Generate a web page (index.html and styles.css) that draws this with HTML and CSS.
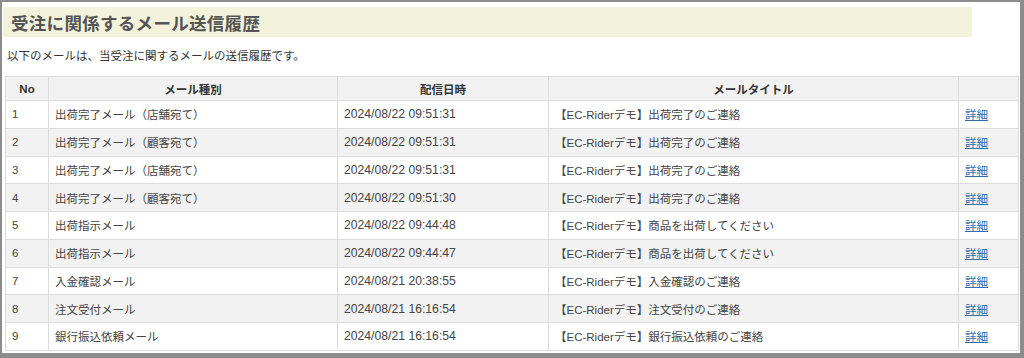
FILE: index.html
```html
<!DOCTYPE html>
<html lang="ja">
<head>
<meta charset="utf-8">
<link rel="stylesheet" href="styles.css">
</head>
<body>
<div class="frame">
  <div class="heading"><h1>受注に関係するメール送信履歴</h1></div>
  <p class="desc">以下のメールは、当受注に関するメールの送信履歴です。</p>
  <table class="hist">
    <colgroup>
      <col class="c-no"><col class="c-kind"><col class="c-date"><col class="c-title"><col class="c-link">
    </colgroup>
    <thead>
      <tr><th>No</th><th>メール種別</th><th>配信日時</th><th>メールタイトル</th><th></th></tr>
    </thead>
    <tbody>
      <tr><td>1</td><td>出荷完了メール（店舗宛て）</td><td class="date">2024/08/22 09:51:31</td><td>【EC-Riderデモ】出荷完了のご連絡</td><td><a href="#">詳細</a></td></tr>
      <tr><td>2</td><td>出荷完了メール（顧客宛て）</td><td class="date">2024/08/22 09:51:31</td><td>【EC-Riderデモ】出荷完了のご連絡</td><td><a href="#">詳細</a></td></tr>
      <tr><td>3</td><td>出荷完了メール（店舗宛て）</td><td class="date">2024/08/22 09:51:31</td><td>【EC-Riderデモ】出荷完了のご連絡</td><td><a href="#">詳細</a></td></tr>
      <tr><td>4</td><td>出荷完了メール（顧客宛て）</td><td class="date">2024/08/22 09:51:30</td><td>【EC-Riderデモ】出荷完了のご連絡</td><td><a href="#">詳細</a></td></tr>
      <tr><td>5</td><td>出荷指示メール</td><td class="date">2024/08/22 09:44:48</td><td>【EC-Riderデモ】商品を出荷してください</td><td><a href="#">詳細</a></td></tr>
      <tr><td>6</td><td>出荷指示メール</td><td class="date">2024/08/22 09:44:47</td><td>【EC-Riderデモ】商品を出荷してください</td><td><a href="#">詳細</a></td></tr>
      <tr><td>7</td><td>入金確認メール</td><td class="date">2024/08/21 20:38:55</td><td>【EC-Riderデモ】入金確認のご連絡</td><td><a href="#">詳細</a></td></tr>
      <tr><td>8</td><td>注文受付メール</td><td class="date">2024/08/21 16:16:54</td><td>【EC-Riderデモ】注文受付のご連絡</td><td><a href="#">詳細</a></td></tr>
      <tr><td>9</td><td>銀行振込依頼メール</td><td class="date">2024/08/21 16:16:54</td><td>【EC-Riderデモ】銀行振込依頼のご連絡</td><td><a href="#">詳細</a></td></tr>
    </tbody>
  </table>
</div>
</body>
</html>
```
FILE: styles.css
```css
html, body {
  margin: 0;
  padding: 0;
  background: #fff;
}
body {
  font-family: "Liberation Sans", Arial, "Noto Sans CJK JP", sans-serif;
  color: #333;
}
.frame {
  box-sizing: border-box;
  width: 1024px;
  height: 358px;
  border-style: solid;
  border-color: #8c8c8c;
  border-width: 2px 4px 5px 2px;
  overflow: hidden;
}
.heading {
  margin: 5px 0 0 1px;
  width: 969px;
  height: 30px;
  background: #f3f3dc;
  display: flex;
  align-items: center;
}
.heading h1 {
  margin: 0 0 0 8px;
  font-size: 17.5px;
  font-weight: bold;
  color: #555;
  letter-spacing: 0.3px;
}
.desc {
  margin: 9px 0 0 5px;
  height: 20px;
  line-height: 20px;
  font-size: 11.5px;
  color: #333;
}
.hist {
  margin: 10px 0 0 3px;
  width: 1013px;
  border-collapse: collapse;
  table-layout: fixed;
  font-size: 11.5px;
}
.c-no { width: 43px; }
.c-kind { width: 289px; }
.c-date { width: 211px; }
.c-title { width: 410px; }
.c-link { width: 60px; }
.hist th, .hist td {
  border: 1px solid #dcdcdc;
  padding: 0 6px;
  white-space: nowrap;
  overflow: hidden;
}
.hist th {
  height: 23px;
  background: #f2f2f2;
  font-weight: bold;
  text-align: center;
  color: #333;
}
.hist td {
  height: 26.75px;
  color: #444;
}
.hist td.date {
  font-size: 12.2px;
}
.hist tbody tr:nth-child(even) td {
  background: #f2f2f2;
}
.hist a {
  color: #2a6fb0;
  text-decoration: underline;
}
```
